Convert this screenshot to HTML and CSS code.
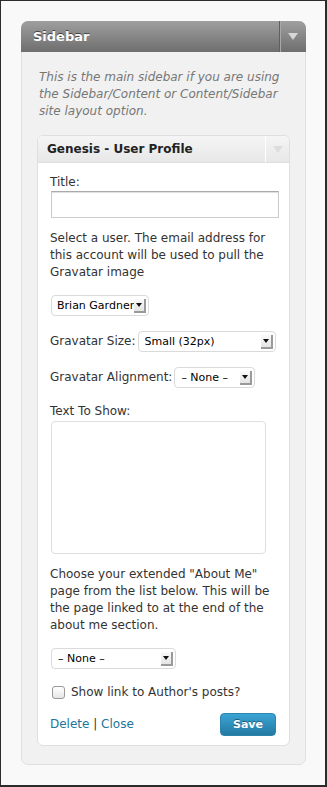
FILE: index.html
```html
<!DOCTYPE html>
<html lang="en">
<head>
    <meta charset="UTF-8">
    <meta name="viewport" content="width=device-width, initial-scale=1.0">
    <title>Sidebar Widgets</title>
    <link rel="stylesheet" href="styles.css">
</head>
<body>

    <div class="frame">
        <!-- Sidebar widget area -->
        <div class="sidebar">
            <div class="sidebar-head">
                <h3>Sidebar</h3>
                <span class="toggle"><span class="tri"></span></span>
            </div>
            <div class="sidebar-body">
                <p class="description">This is the main sidebar if you are using the Sidebar/Content or Content/Sidebar site layout option.</p>

                <!-- Genesis user profile widget -->
                <div class="widget">
                    <div class="widget-head">
                        <h4>Genesis - User Profile</h4>
                        <span class="toggle"><span class="tri"></span></span>
                    </div>
                    <div class="widget-body">
                        <label class="block" for="title">Title:</label>
                        <input type="text" id="title" class="wide">

                        <p class="note">Select a user. The email address for this account will be used to pull the Gravatar image</p>

                        <div class="row">
                            <span class="select user"><span class="value">Brian Gardner</span><span class="arrow"></span></span>
                        </div>

                        <div class="row">
                            <span class="label">Gravatar Size:</span>
                            <span class="select size"><span class="value">Small (32px)</span><span class="arrow"></span></span>
                        </div>

                        <div class="row">
                            <span class="label">Gravatar Alignment:</span>
                            <span class="select align"><span class="value">&ndash; None &ndash;</span><span class="arrow"></span></span>
                        </div>

                        <label class="block" for="text">Text To Show:</label>
                        <textarea id="text"></textarea>

                        <p class="note">Choose your extended "About Me" page from the list below. This will be the page linked to at the end of the about me section.</p>

                        <div class="row">
                            <span class="select page"><span class="value">&ndash; None &ndash;</span><span class="arrow"></span></span>
                        </div>

                        <div class="row check">
                            <span class="checkbox"></span>
                            <span class="label">Show link to Author's posts?</span>
                        </div>

                        <div class="actions">
                            <span class="links"><a href="#">Delete</a> | <a href="#">Close</a></span>
                            <button>Save</button>
                        </div>
                    </div>
                </div>
            </div>
        </div>
    </div>

</body>
</html>
```

FILE: styles.css
```css
body {
    margin: 0;
    font-family: "DejaVu Sans", Verdana, sans-serif;
    font-size: 12px;
    color: #333;
}
.frame {
    box-sizing: border-box;
    height: 787px;
    width: 327px;
    padding: 20px 19px 0 20px;
    background-color: #f9f9f9;
    border-style: solid;
    border-color: #2b2b2b;
    border-width: 1px 2px 2px 1px;
}
.sidebar {
    width: 285px;
    height: 744px;
    box-sizing: border-box;
    background-color: #f1f1f1;
    border: 1px solid #dfdfdf;
    border-radius: 7px;
}
.sidebar-head {
    display: flex;
    height: 31px;
    margin: -1px -1px 0 -1px;
    background: linear-gradient(#9f9f9f, #6e6e6e);
    border-radius: 7px 7px 0 0;
}
.sidebar-head h3 {
    flex: 1;
    margin: 0;
    padding-left: 12px;
    line-height: 31px;
    font-size: 13px;
    color: #fff;
    text-shadow: 0 -1px 0 #444;
}
.toggle {
    display: flex;
    width: 26px;
    flex-shrink: 0;
    align-items: center;
    justify-content: center;
    border-left: 1px solid #5f5f5f;
    box-shadow: inset 1px 0 0 #a8a8a8;
}
.tri {
    width: 0;
    height: 0;
    border-left: 5px solid transparent;
    border-right: 5px solid transparent;
    border-top: 7px solid #d6d6d6;
}
.sidebar-body {
    padding: 17px 15px 0 15px;
}
.description {
    margin: 0 0 15px 2px;
    font-style: italic;
    line-height: 17px;
    color: #777;
}
.widget {
    background-color: #fff;
    border: 1px solid #dfdfdf;
    border-radius: 6px;
}
.widget-head {
    display: flex;
    height: 26px;
    background: linear-gradient(#f5f5f5, #e8e8e8);
    border-bottom: 1px solid #dfdfdf;
    border-radius: 6px 6px 0 0;
}
.widget-head h4 {
    flex: 1;
    margin: 0;
    padding-left: 9px;
    line-height: 26px;
    font-size: 12px;
    color: #222;
}
.widget-head .toggle {
    width: 23px;
    border-left: 1px solid #fff;
    box-shadow: none;
}
.widget-head .tri {
    border-top-color: #ddd;
}
.widget-body {
    padding: 11px 10px 9px 12px;
    line-height: 17px;
}
.block {
    display: block;
}
input.wide {
    display: block;
    box-sizing: border-box;
    width: 228px;
    height: 27px;
    margin: 0 0 12px 1px;
    border: 1px solid #ccc;
    border-top-color: #aaa;
    box-shadow: inset 0 1px 1px #ddd;
}
.note {
    margin: 0 0 14px 0;
}
.row {
    display: flex;
    align-items: center;
    margin-bottom: 15px;
}
.row .label {
    flex-shrink: 0;
    white-space: nowrap;
    margin-right: 1px;
}
.select {
    box-sizing: border-box;
    display: flex;
    flex-shrink: 0;
    align-items: center;
    height: 21px;
    margin-left: 1px;
    padding: 0 2px 0 6px;
    border: 1px solid #dadada;
    border-radius: 4px;
    background-color: #fff;
    font-size: 11px;
    color: #000;
}
.select .value {
    flex: 1;
    white-space: nowrap;
    overflow: hidden;
}
.select .arrow {
    position: relative;
    flex-shrink: 0;
    width: 12px;
    height: 14px;
    background: linear-gradient(#fafafa, #e4e4e4);
    border-right: 2px solid #9a9a9a;
    border-bottom: 2px solid #9a9a9a;
    box-sizing: border-box;
}
.select .arrow::after {
    content: "";
    position: absolute;
    left: 2px;
    top: 4px;
    border-left: 3px solid transparent;
    border-right: 3px solid transparent;
    border-top: 4px solid #111;
}
.select.user {
    width: 98px;
    padding-left: 5px;
}
.select.size {
    width: 138px;
}
.select.align {
    width: 81px;
}
.select.page {
    width: 125px;
}
textarea {
    display: block;
    box-sizing: border-box;
    width: 215px;
    height: 133px;
    margin: 1px 0 12px 1px;
    border: 1px solid #dfdfdf;
    border-radius: 4px;
    resize: none;
}
.row.check {
    margin-bottom: 12px;
}
.checkbox {
    width: 11px;
    height: 11px;
    margin: 0 6px 0 2px;
    border: 1px solid #999;
    border-radius: 3px;
    background: linear-gradient(#fff, #e6e6e6);
}
.actions {
    display: flex;
    align-items: center;
    justify-content: space-between;
    padding-right: 3px;
}
.links {
    color: #333;
}
.links a {
    color: #21759b;
    text-decoration: none;
}
button {
    height: 23px;
    padding: 0 12px;
    font-family: "DejaVu Sans", Verdana, sans-serif;
    font-size: 11px;
    font-weight: bold;
    color: #fff;
    text-shadow: 0 -1px 0 #1c5f80;
    background: linear-gradient(#3aa4d4, #2379a2);
    border: 1px solid #2a84ad;
    border-radius: 4px;
}
```
